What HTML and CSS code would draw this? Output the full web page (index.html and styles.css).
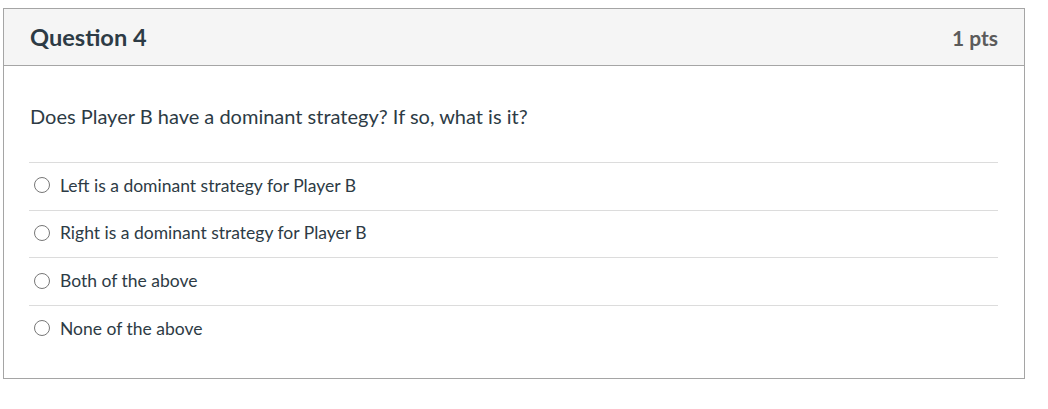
FILE: index.html
```html
<!DOCTYPE html>
<html>
<head>
<meta charset="utf-8">
<link rel="stylesheet" href="styles.css">
</head>
<body>
<div class="question">
  <div class="q-header">
    <span class="q-name">Question 4</span>
    <span class="q-points">1 pts</span>
  </div>
  <div class="q-body">
    <p class="q-text">Does Player B have a dominant strategy? If so, what is it?</p>
    <div class="answers">
      <label class="answer"><span class="radio"></span><span class="answer-text">Left is a dominant strategy for Player B</span></label>
      <label class="answer"><span class="radio"></span><span class="answer-text">Right is a dominant strategy for Player B</span></label>
      <label class="answer"><span class="radio"></span><span class="answer-text">Both of the above</span></label>
      <label class="answer"><span class="radio"></span><span class="answer-text">None of the above</span></label>
    </div>
  </div>
</div>
</body>
</html>
```
FILE: styles.css
```css
html, body {
  margin: 0;
  padding: 0;
  background: #ffffff;
}
body {
  font-family: Lato, "Noto Sans", sans-serif;
  color: #2d3b45;
}
.question {
  box-sizing: border-box;
  width: 1022px;
  margin: 8px 0 0 3px;
  border: 1px solid #a5a5a5;
  background: #fff;
}
.q-header {
  display: flex;
  align-items: center;
  justify-content: space-between;
  height: 56px;
  padding: 0 26px;
  background: #f5f5f5;
  border-bottom: 1px solid #a5a5a5;
}
.q-name {
  font-size: 23.6px;
  font-weight: 700;
  color: #2d3b45;
}
.q-points {
  font-size: 21px;
  font-weight: 700;
  color: #5b5b5b;
}
.q-body {
  padding: 38px 26px 25px 25px;
}
.q-text {
  margin: 0 0 34px 1px;
  font-size: 20px;
  line-height: 24px;
}
.answer {
  box-sizing: border-box;
  display: flex;
  align-items: center;
  height: 47.67px;
  padding-bottom: 2px;
  border-top: 1px solid #dcdcdc;
}
.radio {
  box-sizing: border-box;
  width: 16px;
  height: 16px;
  margin-left: 5px;
  margin-right: 10px;
  border: 1px solid #777;
  border-radius: 50%;
  background: #fff;
  flex: none;
}
.answer-text {
  font-size: 17.5px;
  color: #2d3b45;
}
```
